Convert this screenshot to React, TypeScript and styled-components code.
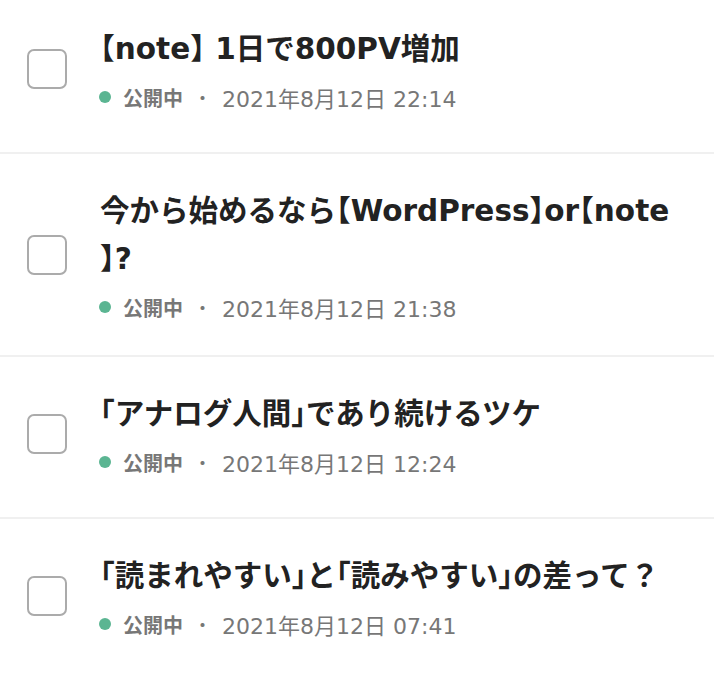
import React from 'react'
import styled, { createGlobalStyle } from 'styled-components'

const GlobalStyle = createGlobalStyle`
  html, body {
    margin: 0;
    padding: 0;
    background: #fff;
    overflow: hidden;
  }
  body {
    font-family: "DejaVu Sans", "Noto Sans CJK JP", sans-serif;
    -webkit-font-smoothing: antialiased;
  }
`

const List = styled.ul`
  list-style: none;
  margin: -8px 0 0;
  padding: 0;
`

const Item = styled.li<{ $tight?: boolean }>`
  display: flex;
  align-items: center;
  gap: 33px;
  padding: 33px 36px ${({ $tight }) => ($tight ? '32px' : '39px')} 27px;
  border-bottom: 2px solid #f0f0f0;
`

const Checkbox = styled.span`
  flex: none;
  width: 40px;
  height: 40px;
  box-sizing: border-box;
  border: 2px solid #ababab;
  border-radius: 7px;
  background: #fff;
`

const Body = styled.div`
  flex: 1;
  min-width: 0;
`

const Title = styled.h2`
  margin: 0;
  font-size: 29.5px;
  line-height: 48px;
  font-weight: 700;
  color: #222;
  line-break: anywhere;
`

// brackets are set half-width, as on the device
const Punct = styled.span`
  font-feature-settings: "halt";
`

const Meta = styled.div`
  display: flex;
  align-items: center;
  margin-top: 8px;
  height: 32px;
  color: #777;
`

const Dot = styled.span`
  width: 12px;
  height: 12px;
  border-radius: 50%;
  background: #5bb592;
  margin: 0 12px 0 -1px;
`

const Status = styled.span`
  font-family: "Noto Sans CJK JP", sans-serif;
  font-size: 20px;
  font-weight: 700;
`

const Separator = styled.span`
  font-family: "Noto Sans CJK JP", sans-serif;
  font-size: 19px;
  margin: 0 10px 0 10px;
`

const Date = styled.span`
  font-size: 22px;
  font-weight: 400;
`

const BRACKETS = /([【】「」])/

function renderTitle(text: string) {
  return text.split(BRACKETS).map((part, i) =>
    BRACKETS.test(part) ? <Punct key={i}>{part}</Punct> : part
  )
}

type Post = { title: string; date: string; tight?: boolean }

const posts: Post[] = [
  { title: '【note】 1日で800PV増加', date: '2021年8月12日 22:14' },
  { title: '今から始めるなら【WordPress】or【note】?', date: '2021年8月12日 21:38', tight: true },
  { title: '「アナログ人間」であり続けるツケ', date: '2021年8月12日 12:24' },
  { title: '「読まれやすい」と「読みやすい」の差って？', date: '2021年8月12日 07:41' }
]

export default function App() {
  return (
    <>
      <GlobalStyle />
      <List>
        {posts.map(post => (
          <Item key={post.date} $tight={post.tight}>
            <Checkbox />
            <Body>
              <Title>{renderTitle(post.title)}</Title>
              <Meta>
                <Dot />
                <Status>公開中</Status>
                <Separator>・</Separator>
                <Date>{post.date}</Date>
              </Meta>
            </Body>
          </Item>
        ))}
      </List>
    </>
  )
}
